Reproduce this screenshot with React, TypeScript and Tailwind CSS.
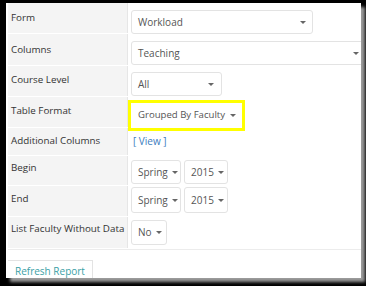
import React from "react";

const Caret = () => (
  <span className="ml-auto inline-block h-0 w-0 shrink-0 border-x-[3px] border-t-[3px] border-x-transparent border-t-[#666]" />
);

function Select({ value, className }: { value: string; className: string }) {
  return (
    <div
      className={`flex h-[24px] items-center whitespace-nowrap rounded-[3px] border border-[#e3e3e3] bg-white pl-[6px] text-[10px] text-[#555] ${className}`}
    >
      <span className="mr-[4px]">{value}</span>
      <Caret />
    </div>
  );
}

function Row({
  label,
  h,
  lpt,
  vpt,
  children,
}: {
  label: string;
  h: string;
  lpt: string;
  vpt: string;
  children: React.ReactNode;
}) {
  return (
    <div className={`flex border-b border-white ${h}`}>
      <div
        className={`w-[120px] shrink-0 whitespace-nowrap border-r border-[#e6e6e6] bg-[#f4f4f4] pl-[3px] text-[9.8px] leading-[14px] text-[#333] ${lpt}`}
      >
        {label}
      </div>
      <div className={`flex flex-1 gap-[3px] pl-[3px] ${vpt}`}>{children}</div>
    </div>
  );
}

const App: React.FC = () => {
  return (
    <div className="h-[286px] w-[366px] overflow-hidden bg-black pl-[6px] pt-[3px] font-['Open_Sans',sans-serif]">
      <div className="h-[275px] w-[355px] bg-white pl-[2px] shadow-[4px_4px_3px_#9a9a9a]">
        <div className="h-full overflow-hidden">
          <Row label="Form" h="h-[31px]" lpt="pt-[8px]" vpt="pt-[7px]">
            <Select value="Workload" className="w-[182px] pr-[6px]" />
          </Row>
          <Row label="Columns" h="h-[32px]" lpt="pt-[9px]" vpt="pt-[7px]">
            <Select value="Teaching" className="w-[236px] shrink-0 pr-[7px]" />
          </Row>
          <Row label="Course Level" h="h-[31px]" lpt="pt-[7px]" vpt="pt-[6px]">
            <Select value="All" className="w-[91px] pr-[7px]" />
          </Row>
          <Row label="Table Format" h="h-[31px]" lpt="pt-[7px]" vpt="pt-[3px]">
            <div className="-ml-[3px] flex h-[31px] w-[117px] shrink-0 items-center whitespace-nowrap border-[3px] border-[#ffff00] bg-white pl-[7px] pr-[6px] text-[9.6px] text-[#555]">
              <span className="mr-[5px]">Grouped By Faculty</span>
              <Caret />
            </div>
          </Row>
          <Row label="Additional Columns" h="h-[28px]" lpt="pt-[6px]" vpt="pt-[6px]">
            <span className="ml-[2px] text-[10px] leading-[14px] text-[#3b7cc0]">[ View ]</span>
          </Row>
          <Row label="Begin" h="h-[30px]" lpt="pt-[5px]" vpt="pt-[4px]">
            <Select value="Spring" className="w-[50px] pr-[7px]" />
            <Select value="2015" className="w-[44px] pr-[7px]" />
          </Row>
          <Row label="End" h="h-[31px]" lpt="pt-[6px]" vpt="pt-[1px]">
            <Select value="Spring" className="h-[26px] w-[50px] pr-[7px]" />
            <Select value="2015" className="h-[26px] w-[44px] pr-[7px]" />
          </Row>
          <Row label="List Faculty Without Data" h="h-[32px]" lpt="pt-[5px]" vpt="pt-[3px]">
            <Select value="No" className="h-[25px] w-[36px] pr-[7px]" />
          </Row>
          <div className="border-t border-[#ececec] pt-[7px]">
            <div className="-ml-[1px] inline-flex h-[26px] items-start border border-[#e3e3e3] px-[7px] pt-[3px] text-[10px] leading-[14px] text-[#3a9fa6]">
              Refresh Report
            </div>
          </div>
        </div>
      </div>
    </div>
  );
};

export default App;
